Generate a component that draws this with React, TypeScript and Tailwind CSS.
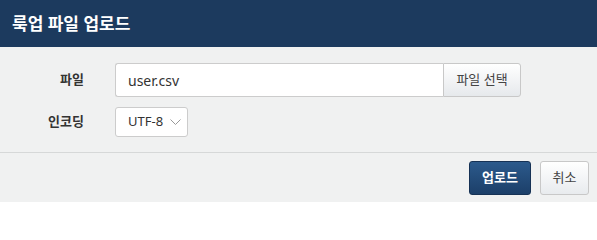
import React, { useState } from 'react';

export default function App() {
  const [fileName] = useState('user.csv');
  const [encoding, setEncoding] = useState('UTF-8');

  return (
    <div
      className="w-[597px] h-[202px] bg-[#f0f1f1] flex flex-col overflow-hidden"
      style={{ fontFamily: '"Noto Sans", "Noto Sans CJK KR", sans-serif' }}
    >
      {/* Header */}
      <div className="h-[47px] bg-[#1c3a5e] flex items-center px-3 shrink-0">
        <h2 className="text-[17px] font-bold text-white leading-none">룩업 파일 업로드</h2>
      </div>

      {/* Body */}
      <div className="flex flex-col gap-[10px] pt-4 pb-[15px]">
        <div className="flex items-center">
          <label className="w-[84px] text-right text-[13px] font-bold text-[#333]">파일</label>
          <div className="ml-[31px] flex">
            <div className="w-[328px] h-[34px] bg-white border border-[#ccc] border-r-0 rounded-l-[3px] flex items-center px-3 text-[14px] text-[#333]">
              {fileName}
            </div>
            <button className="w-[78px] h-[34px] border border-[#c8c8c8] rounded-r-[3px] bg-gradient-to-b from-white to-[#e6e9ec] text-[13px] text-[#444]">
              파일 선택
            </button>
          </div>
        </div>
        <div className="flex items-center">
          <label className="w-[84px] text-right text-[13px] font-bold text-[#333]">인코딩</label>
          <div className="ml-[31px] relative w-[73px] h-[30px]">
            <select
              value={encoding}
              onChange={e => setEncoding(e.target.value)}
              className="appearance-none w-full h-full bg-white border border-[#ccc] rounded-[3px] pl-3 text-[13px] text-[#333]"
            >
              <option>UTF-8</option>
              <option>EUC-KR</option>
            </select>
            <svg
              className="absolute right-[7px] top-[12px] pointer-events-none"
              width="11"
              height="6"
              viewBox="0 0 11 6"
              fill="none"
            >
              <path d="M0.5 0.5 L5.5 5.5 L10.5 0.5" stroke="#999" strokeWidth="1" />
            </svg>
          </div>
        </div>
      </div>

      {/* Footer */}
      <div className="border-t border-[#d6d8d8] flex justify-end gap-[9px] pt-2 pr-2">
        <button className="w-[62px] h-[34px] rounded-[3px] border border-[#163255] bg-gradient-to-b from-[#2c5a8c] to-[#1c3f69] text-white text-[13px] font-bold">
          업로드
        </button>
        <button className="w-[49px] h-[34px] rounded-[3px] border border-[#c8c8c8] bg-gradient-to-b from-white to-[#e8ebee] text-[#444] text-[13px]">
          취소
        </button>
      </div>
    </div>
  );
}
